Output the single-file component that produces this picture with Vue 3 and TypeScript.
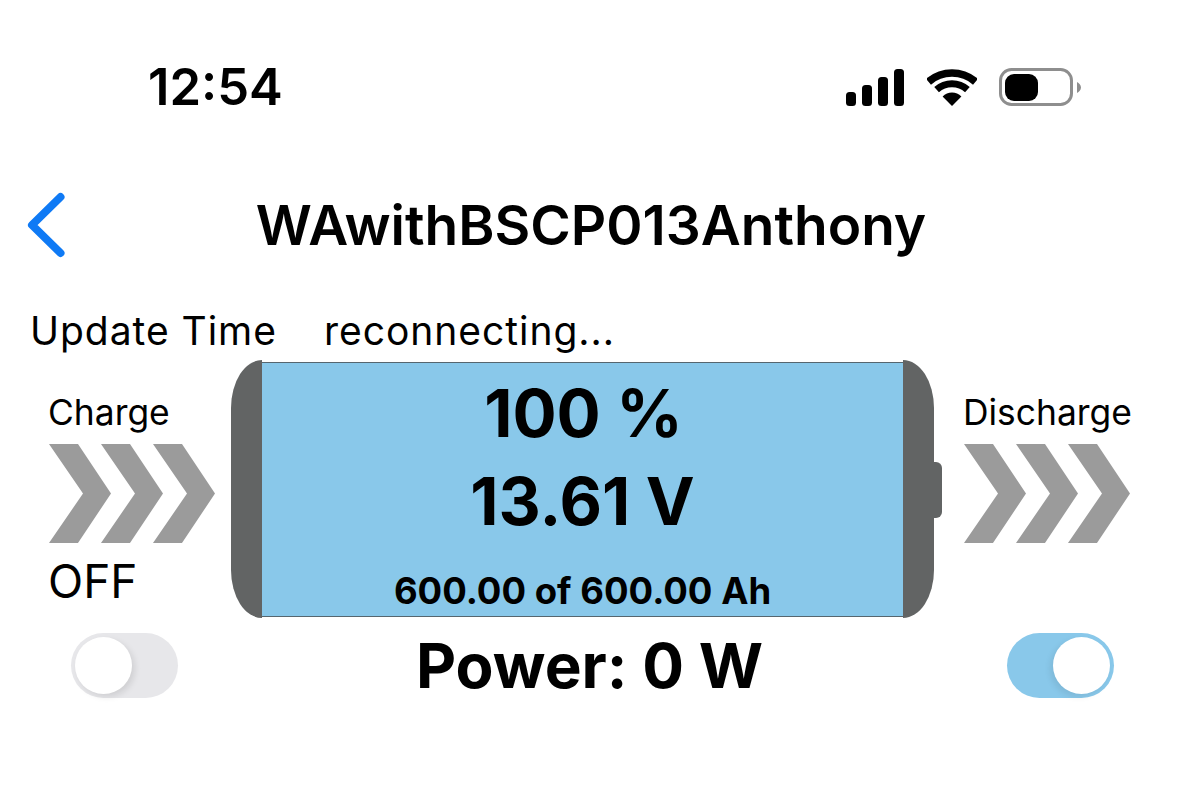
<script setup lang="ts">
const chevrons: string[] = [
  'M0 0H29L62 49.5L29 99H0L34 49.5Z',
  'M52 0H81L114 49.5L81 99H52L86 49.5Z',
  'M104 0H133L166 49.5L133 99H104L138 49.5Z',
]
</script>

<template>
  <div class="page">
    <header class="status">
      <span class="time">12:54</span>
      <div class="status-icons">
        <svg class="signal" width="58" height="37" viewBox="0 0 58 37">
          <rect x="0" y="23" width="10" height="14" rx="3.5" />
          <rect x="16" y="16" width="10" height="21" rx="3.5" />
          <rect x="32" y="8" width="10" height="29" rx="3.5" />
          <rect x="48" y="0" width="10" height="37" rx="3.5" />
        </svg>
        <svg class="wifi" width="50" height="38" viewBox="0 0 50 38">
          <path d="M1.5 12.4A36 36 0 0 1 48.5 12.4" fill="none" stroke="#000" stroke-width="7.6" transform="translate(0 1.4)" />
          <path d="M9.6 21.6A23 23 0 0 1 40.4 21.6" fill="none" stroke="#000" stroke-width="7" />
          <path d="M25 38L15.6 28.4A13.5 13.5 0 0 1 34.4 28.4Z" />
        </svg>
        <svg class="cell" width="82" height="38" viewBox="0 0 82 38">
          <rect x="1.5" y="1.5" width="71" height="35" rx="11" fill="none" stroke="#8e8e8e" stroke-width="3" />
          <rect x="6" y="6" width="33" height="27" rx="9" />
          <path d="M78 14C80 15 82 17 82 19.500C82 22 80 24 78 25Z" fill="#8e8e8e" />
        </svg>
      </div>
    </header>

    <nav class="navbar">
      <svg class="back" width="40" height="66" viewBox="0 0 40 66">
        <path d="M33.500 5L5 33L33.500 61" fill="none" stroke="#0f7af5" stroke-width="8" stroke-linecap="round" stroke-linejoin="round" />
      </svg>
      <h1 class="title">WAwithBSCP013Anthony</h1>
    </nav>

    <div class="update">
      <span>Update Time</span>
      <span>reconnecting...</span>
    </div>

    <main class="panel">
      <section class="side side-left">
        <span class="label">Charge</span>
        <svg class="arrows" width="166" height="99" viewBox="0 0 166 99">
          <path v-for="d in chevrons" :key="d" :d="d" fill="#9b9b9b" />
        </svg>
        <span class="state">OFF</span>
      </section>

      <section class="battery">
        <div class="cap cap-left"></div>
        <div class="charge">
          <div class="percent">100 %</div>
          <div class="volts">13.61 V</div>
          <div class="amps">600.00 of 600.00 Ah</div>
        </div>
        <div class="cap cap-right"></div>
        <div class="nub"></div>
      </section>

      <section class="side side-right">
        <span class="label">Discharge</span>
        <svg class="arrows" width="166" height="99" viewBox="0 0 166 99">
          <path v-for="d in chevrons" :key="d" :d="d" fill="#9b9b9b" />
        </svg>
      </section>

      <div class="toggle-cell toggle-cell-left">
        <div class="toggle toggle-off"><span class="knob"></span></div>
      </div>
      <div class="power">Power: 0 W</div>
      <div class="toggle-cell toggle-cell-right">
        <div class="toggle toggle-on"><span class="knob"></span></div>
      </div>
    </main>
  </div>
</template>

<style scoped>
.page {
  width: 1179px;
  height: 801px;
  background: #fff;
  color: #000;
  font-family: Inter, "Liberation Sans", sans-serif;
  overflow: hidden;
}
.status {
  display: flex;
  align-items: center;
  justify-content: space-between;
  height: 38px;
  padding: 68px 98px 0 148px;
}
.time {
  font-size: 50.700px;
  font-weight: 600;
  line-height: 40px;
}
.status-icons {
  display: flex;
  align-items: flex-start;
  height: 38px;
}
.signal {
  margin-top: 1px;
  margin-right: 23px;
}
.wifi {
  margin-right: 22px;
}
.navbar {
  display: flex;
  align-items: flex-start;
  justify-content: center;
  position: relative;
  height: 66px;
  margin-top: 87px;
}
.back {
  position: absolute;
  left: 27px;
  top: -1px;
}
.title {
  margin: 0;
  padding-left: 3px;
  font-size: 55px;
  font-weight: 600;
  line-height: 64px;
}
.update {
  display: flex;
  gap: 47px;
  height: 44px;
  margin-top: 50px;
  padding-left: 30px;
  font-size: 39px;
  letter-spacing: 0.97px;
  line-height: 44px;
}
.panel {
  display: grid;
  grid-template-columns: 231px 711px 237px;
  grid-template-rows: 258px 65px;
  row-gap: 15px;
  margin-top: 7px;
}
.side {
  display: flex;
  flex-direction: column;
  align-items: flex-start;
}
.side-left {
  padding-left: 49px;
}
.side-right {
  padding-left: 22px;
}
.label {
  height: 44px;
  margin-top: 31px;
  margin-bottom: 9px;
  margin-left: -1px;
  font-size: 35.400px;
  line-height: 44px;
}
.state {
  margin-top: 10px;
  margin-left: -1px;
  font-size: 46px;
  line-height: 56px;
}
.battery {
  display: flex;
  align-items: stretch;
}
.cap {
  width: 31px;
  background: #626464;
}
.cap-left {
  border-radius: 31px 0 0 31px / 48px 0 0 48px;
}
.cap-right {
  border-radius: 0 31px 31px 0 / 0 48px 48px 0;
}
.nub {
  width: 8px;
  height: 56px;
  margin-top: 102px;
  background: #626464;
  border-radius: 0 6px 6px 0;
}
.charge {
  flex: 1;
  display: flex;
  flex-direction: column;
  align-items: center;
  margin: 2px 0 1px;
  background: #89c8ea;
  border-top: 1px solid #56666f;
  border-bottom: 1px solid #56666f;
  font-weight: 700;
}
.percent,
.volts {
  font-size: 65.500px;
  line-height: 86px;
}
.percent {
  margin-top: 8px;
  padding-left: 2px;
}
.volts {
  margin-top: 2px;
}
.amps {
  margin-top: 26px;
  font-size: 36.500px;
  line-height: 40px;
}
.toggle-cell-left {
  padding-left: 71px;
}
.toggle-cell-right {
  padding-left: 65px;
}
.toggle {
  display: flex;
  width: 107px;
  height: 65px;
  padding: 4px;
  box-sizing: border-box;
  border-radius: 33px;
}
.toggle-off {
  justify-content: flex-start;
  background: #e7e7ea;
}
.toggle-on {
  justify-content: flex-end;
  background: #89c8ea;
}
.knob {
  width: 57px;
  height: 57px;
  border-radius: 50%;
  background: #fff;
  box-shadow: 3px 3px 6px rgba(0, 0, 0, 0.1);
}
.toggle-on .knob {
  box-shadow: -3px 3px 6px rgba(0, 0, 0, 0.08);
}
.power {
  font-size: 62px;
  font-weight: 700;
  line-height: 65px;
  text-align: center;
  padding-left: 6px;
}
</style>
